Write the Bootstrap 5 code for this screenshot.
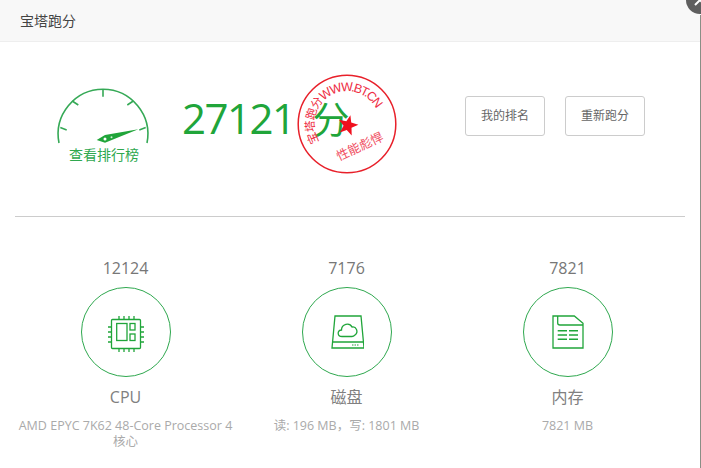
<!DOCTYPE html>
<html lang="zh">
<head>
<meta charset="utf-8">
<title>宝塔跑分</title>
<link rel="stylesheet" href="https://cdn.jsdelivr.net/npm/bootstrap@5.3.0/dist/css/bootstrap.min.css">
<style>
html,body{margin:0;width:701px;height:468px;overflow:hidden;background:#fff}
body{font-family:"Open Sans","Noto Sans CJK SC",sans-serif;color:#666;position:relative}
.bt-head{height:42px;background:#f8f8f8;border-bottom:1px solid #eee;padding-left:20px;font-size:14px;line-height:41px;color:#444}
.bt-close{position:absolute;left:686px;top:-14px;width:28px;height:28px;border-radius:50%;background:#5f5f5f}
.bt-close svg{display:block}
.bt-edge{position:absolute;left:700px;top:15px;width:1px;height:453px;background:#8a8f86}
.bt-top{height:175px;margin:0 16px 0 15px;border-bottom:1px solid #ccc}
.bt-gauge{margin-left:43px;padding-top:46px;width:92px}
.bt-gauge svg{display:block;overflow:visible}
.bt-gauge-label{font-size:14px;line-height:20px;color:#2fa84f;text-align:center;white-space:nowrap;margin-top:-1px}
.bt-score{margin-left:32px;padding-top:48px;color:#20a53a;font-size:42px;line-height:56px;letter-spacing:-1.500px;white-space:nowrap}
.bt-score span{font-size:37px;margin-left:18px;letter-spacing:0}
.bt-actions{margin-left:auto;margin-right:40px;margin-top:54px;gap:20px}
.bt-btn{width:80px;height:40px;padding:0;border:1px solid #ccc;border-radius:3px;background:#fff;color:#666;font-size:12px;line-height:38px}
.bt-cols{padding:40px 0 0 15px;width:678px}
.bt-col{width:221px;text-align:center}
.bt-num{font-size:16px;line-height:22px;color:#777}
.bt-ring{width:90px;height:90px;border:1px solid #2fa84f;border-radius:50%;margin:8px auto 9px}
.bt-chip{margin-top:3px}
.bt-name{font-size:16px;line-height:22px;color:#808080}
.bt-desc{font-size:12.500px;line-height:16px;color:#aaa;margin-top:10px}
.bt-stamp{position:absolute;left:297px;top:74px;width:100px;height:100px}
.bt-stamp text{font-family:"Liberation Sans","Noto Sans CJK SC",sans-serif;fill:#ee2d44}
</style>
</head>
<body>
<div class="bt-head">宝塔跑分</div>
<div class="bt-top d-flex align-items-start">
  <div class="bt-gauge">
    <svg width="92" height="58" viewBox="0 0 92 58" fill="none" stroke="#35a956" stroke-width="1.600">
      <path d="M1 55A45 45 0 0 1 45 1.300 45 45 0 0 1 89 55"/>
      <path d="M45 1.500V8.700M14.200 13 20.300 17M2.300 39.600 8.700 42M69.300 17 75.300 13M81.300 42 87.700 39.600"/>
      <path d="M38.700 52 47 47 80.300 41.300 47 54.700Z" fill="#20a53a" stroke="none"/>
      <circle cx="47" cy="51" r="1.500" fill="#fff" stroke="none"/>
      <circle cx="53.500" cy="49.300" r="1" fill="#cfeed6" stroke="none"/>
    </svg>
    <div class="bt-gauge-label">查看排行榜</div>
  </div>
  <div class="bt-score">27121<span>分</span></div>
  <div class="bt-actions d-flex">
    <button type="button" class="btn bt-btn">我的排名</button>
    <button type="button" class="btn bt-btn">重新跑分</button>
  </div>
</div>
<div class="bt-cols d-flex">
  <div class="bt-col">
    <div class="bt-num">12124</div>
    <div class="bt-ring d-flex align-items-center justify-content-center">
      <svg class="bt-chip" width="36" height="36" viewBox="0 0 36 36" fill="none" stroke="#20a53a" stroke-width="1.300">
        <rect x="3.500" y="3.500" width="29" height="29" rx="1"/>
        <rect x="8.700" y="7.500" width="10.300" height="17"/>
        <rect x="22" y="7.500" width="5" height="6.500"/><rect x="22" y="18" width="5" height="6.500"/>
        <path d="M11 0v3.500M16 0v3.500M21 0v3.500M26 0v3.500M11 32.500V36M16 32.500V36M21 32.500V36M26 32.500V36M0 11h3.500M0 16h3.500M0 21h3.500M0 26h3.500M32.500 11H36M32.500 16H36M32.500 21H36M32.500 26H36"/>
      </svg>
    </div>
    <div class="bt-name">CPU</div>
    <div class="bt-desc">AMD EPYC 7K62 48-Core Processor 4 核心</div>
  </div>
  <div class="bt-col">
    <div class="bt-num">7176</div>
    <div class="bt-ring d-flex align-items-center justify-content-center">
      <svg width="34" height="34" viewBox="-1 0 34 34" fill="none" stroke="#20a53a" stroke-width="1.300">
        <path d="M4 1H30L33 33H1ZM1.500 27H32.500"/>
        <path d="M11 21.500c-5 0-5-6.500-.5-6.500 0-6 8-8 10.500-3 4-1 7 5 3 8-1 1-2 1.500-3 1.500Z"/>
        <path d="M21 30h1.500M23.500 30H25M26 30h1.500" stroke-width="1"/>
      </svg>
    </div>
    <div class="bt-name">磁盘</div>
    <div class="bt-desc">读: 196 MB，写: 1801 MB</div>
  </div>
  <div class="bt-col">
    <div class="bt-num">7821</div>
    <div class="bt-ring d-flex align-items-center justify-content-center">
      <svg width="32" height="34" viewBox="0 0 32 34" fill="none" stroke="#20a53a" stroke-width="1.300">
        <path d="M1 1H22.300L31 8.300V33H1Z"/>
        <path d="M5.700 1V8Q5.700 10 8 10H31"/>
        <path d="M5.700 15.700H15M17 15.700H26M5.700 20H15M17 20H26M5.700 24.300H15M17 24.300H26" stroke-width="1.500"/>
      </svg>
    </div>
    <div class="bt-name">内存</div>
    <div class="bt-desc">7821 MB</div>
  </div>
</div>
<svg class="bt-stamp" viewBox="0 0 100 100" fill="none">
  <defs><path id="btArc" d="M22.100 67.700A33 33 0 1 1 83 50"/></defs>
  <circle cx="50" cy="50" r="48.800" stroke="#e8202a" stroke-width="1.500"/>
  <text><textPath href="#btArc"><tspan font-size="11.500" letter-spacing="-.5">宝塔跑分</tspan><tspan font-size="12.500" letter-spacing="-1.500">WWW.BT.CN</tspan></textPath></text>
  <text font-size="12.500" transform="translate(42 87) rotate(-25)" opacity=".85">性能彪悍</text>
  <path transform="rotate(14 51 51)" d="M51 41l2.500 6.800 7.500.4-5.900 4.700 2 7.300-6.100-4-6.100 4 2-7.300-5.900-4.700 7.500-.4Z" fill="#f0101e"/>
</svg>
<div class="bt-close"><svg width="28" height="28" viewBox="0 0 28 28" stroke="#fff" stroke-width="2"><path d="M9 9l10 10M19 9 9 19"/></svg></div>
<div class="bt-edge"></div>
<script src="https://cdn.jsdelivr.net/npm/bootstrap@5.3.0/dist/js/bootstrap.bundle.min.js"></script>
</body>
</html>
